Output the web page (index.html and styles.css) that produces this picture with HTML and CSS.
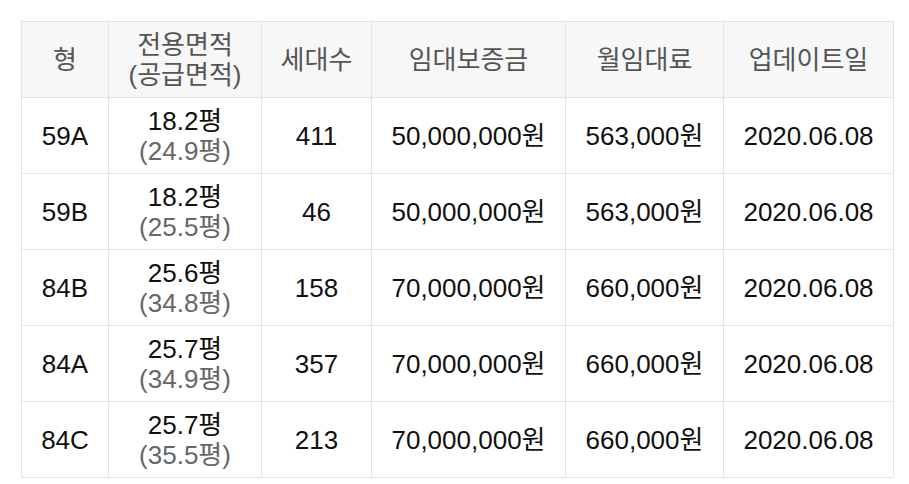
FILE: index.html
```html
<!DOCTYPE html>
<html lang="ko">
<head>
<meta charset="utf-8">
<link rel="stylesheet" href="styles.css">
</head>
<body>
<table class="grid">
  <colgroup>
    <col class="c1"><col class="c2"><col class="c3"><col class="c4"><col class="c5"><col class="c6">
  </colgroup>
  <thead>
    <tr>
      <th>형</th>
      <th>전용면적<br>(공급면적)</th>
      <th>세대수</th>
      <th>임대보증금</th>
      <th>월임대료</th>
      <th>업데이트일</th>
    </tr>
  </thead>
  <tbody>
    <tr><td>59A</td><td>18.2평<br><span class="sub">(24.9평)</span></td><td>411</td><td>50,000,000원</td><td>563,000원</td><td>2020.06.08</td></tr>
    <tr><td>59B</td><td>18.2평<br><span class="sub">(25.5평)</span></td><td>46</td><td>50,000,000원</td><td>563,000원</td><td>2020.06.08</td></tr>
    <tr><td>84B</td><td>25.6평<br><span class="sub">(34.8평)</span></td><td>158</td><td>70,000,000원</td><td>660,000원</td><td>2020.06.08</td></tr>
    <tr><td>84A</td><td>25.7평<br><span class="sub">(34.9평)</span></td><td>357</td><td>70,000,000원</td><td>660,000원</td><td>2020.06.08</td></tr>
    <tr><td>84C</td><td>25.7평<br><span class="sub">(35.5평)</span></td><td>213</td><td>70,000,000원</td><td>660,000원</td><td>2020.06.08</td></tr>
  </tbody>
</table>
</body>
</html>
```
FILE: styles.css
```css
html, body {
  margin: 0;
  padding: 0;
  background: #ffffff;
}
body {
  padding: 21px 0 0 21px;
  font-family: "Liberation Sans", Arial, "Noto Sans CJK KR", sans-serif;
  color: #111;
}
.grid {
  border-collapse: collapse;
  table-layout: fixed;
  width: 872px;
  font-size: 26px;
  line-height: 30px;
}
.c1 { width: 87px; }
.c2 { width: 153px; }
.c3 { width: 110px; }
.c4 { width: 194px; }
.c5 { width: 158px; }
.c6 { width: 170px; }
.grid th, .grid td {
  border: 1px solid #e3e3e3;
  text-align: center;
  vertical-align: middle;
  padding: 0;
  height: 75px;
}
.grid th {
  background: #f7f7f7;
  color: #555;
  font-weight: normal;
}
.sub {
  color: #666;
}
```
